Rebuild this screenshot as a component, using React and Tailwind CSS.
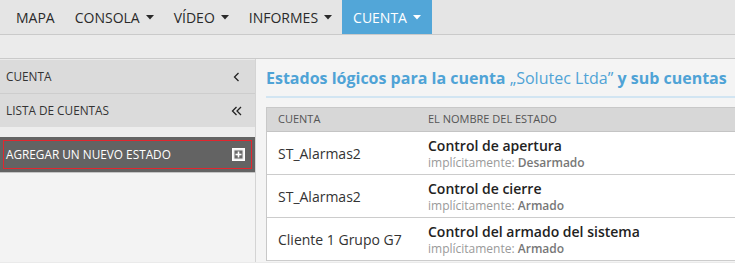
import React from 'react'

const Caret = () => (
  <svg width="8" height="5" viewBox="0 0 8 5" className="ml-[6px] mt-[1px]">
    <polygon points="0,0 8,0 4,4.5" fill="currentColor" />
  </svg>
)

const ChevronLeft = () => (
  <svg width="7" height="10" viewBox="0 0 7 10" fill="none" stroke="#222" strokeWidth="1.3">
    <polyline points="5.5,1 1.5,5 5.5,9" />
  </svg>
)

const ChevronsLeft = () => (
  <svg width="11" height="10" viewBox="0 0 11 10" fill="none" stroke="#222" strokeWidth="1.3">
    <polyline points="5.5,1 1.5,5 5.5,9" />
    <polyline points="10,1 6,5 10,9" />
  </svg>
)

const PlusSquare = () => (
  <svg width="13" height="13" viewBox="0 0 13 13">
    <rect x="0.75" y="0.75" width="11.5" height="11.5" fill="#e8e8e8" stroke="#fff" strokeWidth="1.5" />
    <rect x="2.5" y="2.5" width="8" height="8" fill="#6a6a6a" />
    <line x1="6.5" y1="3.5" x2="6.5" y2="9.5" stroke="#fff" strokeWidth="1.6" />
    <line x1="3.5" y1="6.5" x2="9.5" y2="6.5" stroke="#fff" strokeWidth="1.6" />
  </svg>
)

const NAV = [
  { label: 'MAPA' },
  { label: 'CONSOLA', caret: true },
  { label: 'VÍDEO', caret: true },
  { label: 'INFORMES', caret: true },
  { label: 'CUENTA', caret: true, active: true },
]

const ROWS = [
  { account: 'ST_Alarmas2', name: 'Control de apertura', state: 'Desarmado' },
  { account: 'ST_Alarmas2', name: 'Control de cierre', state: 'Armado' },
  { account: 'Cliente 1 Grupo G7', name: 'Control del armado del sistema', state: 'Armado' },
]

export default function App() {
  return (
    <div className="w-[735px] h-[263px] overflow-hidden bg-[#eaeaea] font-['Open_Sans',sans-serif] text-[#333]">

      {/* Top menu */}
      <nav className="h-[35px] flex pl-[6px] bg-[#e5e5e5] border-b border-[#cacaca]">
        {NAV.map(({ label, caret, active }) => (
          <div key={label}
            className={`flex items-center px-[10px] text-[14px] ${active ? 'bg-[#52a6d8] text-white px-[11px]' : 'text-[#2a2a2a]'}`}>
            {label}
            {caret && <Caret />}
          </div>
        ))}
      </nav>

      {/* Sub bar */}
      <div className="h-[24px] bg-[#ebebeb] border-b border-[#cacaca]"></div>

      <div className="flex h-[203px]">

        {/* Sidebar */}
        <aside className="w-[256px] flex flex-col border-r border-[#d4d4d4] pt-[1px]">
          <div className="h-[34px] flex items-center justify-between pl-[6px] pr-[15px] pt-[1px] bg-[#dbdbdb] border-b border-[#cdcdcd] text-[11.8px]">
            CUENTA
            <ChevronLeft />
          </div>
          <div className="h-[33px] flex items-center justify-between pl-[6px] pr-[13px] bg-[#dbdbdb] text-[11.8px]">
            LISTA DE CUENTAS
            <ChevronsLeft />
          </div>
          <div className="h-[10px] bg-[#ededed]"></div>
          <div className="h-[35px] bg-[#636363] px-[3px] py-[3px]">
            <div className="h-[29px] flex items-center justify-between pl-[2px] pr-[6px] border border-solid border-[#e3262e] text-[11.8px] text-white">
              AGREGAR UN NUEVO ESTADO
              <PlusSquare />
            </div>
          </div>
          <div className="flex-1 bg-[#f3f3f3] border-t border-[#c4c4c4]"></div>
        </aside>

        {/* Main */}
        <main className="flex-1 bg-[#f4f4f4] pl-[10px] pt-[8px] overflow-hidden">
          <h1 className="text-[16px] leading-[22px] font-bold text-[#4fa3d6] whitespace-nowrap pb-[7px] border-b-2 border-[#d2e5f2]">
            Estados lógicos para la cuenta <span className="font-normal">„Solutec Ltda”</span> y sub cuentas
          </h1>

          <div className="mt-[9px] border-l border-t border-[#c8c8c8] w-[600px]">
            <div className="h-[24px] flex items-center bg-[#d7d7d7] border-b border-[#c4c4c4] text-[11px] text-[#555]">
              <div className="w-[150px] pl-[11px]">CUENTA</div>
              <div className="pl-[11px]">EL NOMBRE DEL ESTADO</div>
            </div>
            {ROWS.map((r, i) => (
              <div key={i} className="h-[43px] flex items-center bg-white border-b border-[#cccccc]">
                <div className="w-[150px] pl-[11px] text-[14px] text-[#333]">{r.account}</div>
                <div className="pl-[11px] pt-[1px]">
                  <div className="text-[14px] leading-[18px] font-semibold text-[#222]">{r.name}</div>
                  <div className="text-[12px] leading-[15px] text-[#9a9a9a]">
                    implícitamente: <span className="font-semibold text-[#777]">{r.state}</span>
                  </div>
                </div>
              </div>
            ))}
          </div>
        </main>
      </div>
    </div>
  )
}
